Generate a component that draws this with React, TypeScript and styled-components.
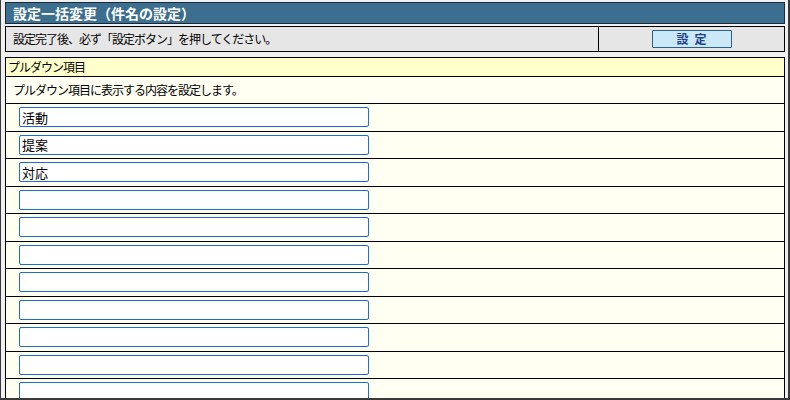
import * as React from "react";
import styled, { createGlobalStyle } from "styled-components";

const GlobalStyle = createGlobalStyle`
  html, body {
    margin: 0;
    padding: 0;
    background: #f0f0f0;
  }
  body {
    font-family: "Noto Sans CJK JP", "Noto Sans", sans-serif;
    font-size: 12px;
    color: #000;
  }
`;

const Frame = styled.div`
  box-sizing: border-box;
  width: 790px;
  height: 400px;
  overflow: hidden;
  background: #f0f0f0;
  border-left: 1px solid #3a3a3a;
  border-right: 2px solid #3a3a3a;
  border-bottom: 2px solid #3a3a3a;
  padding: 2px 3px 0 4px;
`;

const TitleBar = styled.div`
  box-sizing: border-box;
  height: 22px;
  background: #3c6e90;
  border: 1px solid #1c2a36;
  color: #fff;
  font-weight: bold;
  font-size: 14px;
  line-height: 20px;
  padding-left: 7px;
`;

const NoticeTable = styled.div`
  box-sizing: border-box;
  margin-top: 2px;
  height: 26px;
  display: grid;
  grid-template-columns: 593px 1fr;
  background: #e6e6e6;
  border: 1px solid #000;
`;

const NoticeText = styled.div`
  padding-left: 7px;
  line-height: 24px;
  letter-spacing: -1px;
  border-right: 1px solid #000;
`;

const ButtonCell = styled.div`
  display: flex;
  align-items: center;
  justify-content: center;
`;

const SetButton = styled.button`
  box-sizing: border-box;
  width: 80px;
  height: 18px;
  padding: 0;
  background: #cbe8f6;
  border: 1px solid #2b5f84;
  border-radius: 1px;
  color: #1c3f8f;
  font-family: inherit;
  font-weight: bold;
  font-size: 12px;
  line-height: 16px;
  letter-spacing: 6px;
  text-indent: 6px;
`;

const ItemTable = styled.div`
  box-sizing: border-box;
  margin-top: 5px;
  border: 1px solid #000;
  border-bottom: none;
  background: #fffff2;
`;

const SectionHeader = styled.div`
  box-sizing: border-box;
  height: 19px;
  background: #ffffcc;
  border-bottom: 1px solid #000;
  padding-left: 2px;
  line-height: 18px;
  letter-spacing: -1px;
`;

const Description = styled.div`
  box-sizing: border-box;
  height: 27px;
  border-bottom: 1px solid #000;
  padding-left: 7px;
  line-height: 26px;
  letter-spacing: -1px;
`;

const ItemRow = styled.div`
  box-sizing: border-box;
  height: 27.5px;
  border-bottom: 1px solid #000;
  padding: 3px 0 0 13px;
`;

const ItemInput = styled.input`
  box-sizing: border-box;
  display: block;
  width: 350px;
  height: 20px;
  margin: 0;
  padding: 0 2px;
  background: #fff;
  border: 1px solid #1b6fce;
  border-radius: 2px;
  font-family: inherit;
  font-size: 13px;
  color: #000;
  outline: none;
`;

const items = ["活動", "提案", "対応", "", "", "", "", "", "", "", "", ""];

const App = () => {
  return (
    <>
      <GlobalStyle />
      <Frame>
        <TitleBar>設定一括変更（件名の設定）</TitleBar>
        <NoticeTable>
          <NoticeText>設定完了後、必ず「設定ボタン」を押してください。</NoticeText>
          <ButtonCell>
            <SetButton type="button">設定</SetButton>
          </ButtonCell>
        </NoticeTable>
        <ItemTable>
          <SectionHeader>プルダウン項目</SectionHeader>
          <Description>プルダウン項目に表示する内容を設定します。</Description>
          {items.map((value, i) => (
            <ItemRow key={i}>
              <ItemInput type="text" defaultValue={value} />
            </ItemRow>
          ))}
        </ItemTable>
      </Frame>
    </>
  );
};

export default App;
